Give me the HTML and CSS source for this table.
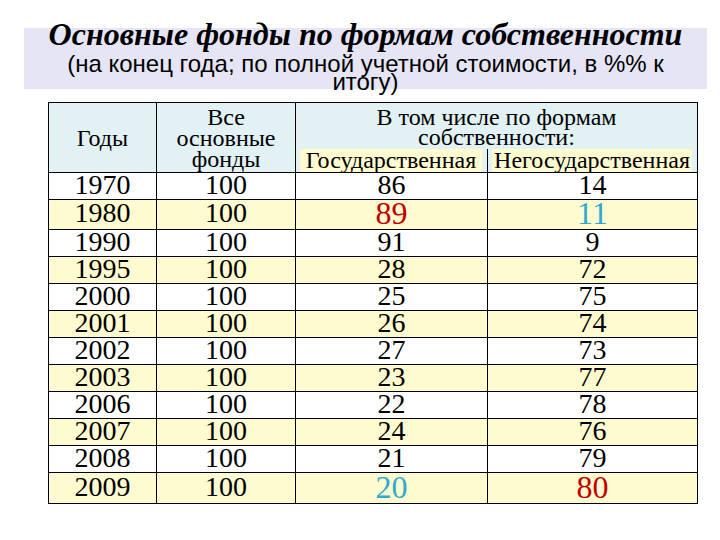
FILE: index.html
```html
<!DOCTYPE html>
<html lang="ru">
<head>
<meta charset="utf-8">
<link rel="stylesheet" href="styles.css">
</head>
<body>
<div class="slide">
  <div class="band">
    <h1 class="title">Основные фонды по формам собственности</h1>
    <p class="sub">(на конец года; по полной учетной стоимости, в %% к<br>итогу)</p>
  </div>
  <table class="grid">
    <colgroup>
      <col class="c1"><col class="c2"><col class="c3"><col class="c4">
    </colgroup>
    <thead>
      <tr class="h1row">
        <th rowspan="2" class="years">Годы</th>
        <th rowspan="2" class="all">Все<br>основные<br>фонды</th>
        <th colspan="2" class="incl">В том числе по формам<br>собственности:</th>
      </tr>
      <tr class="h2row">
        <th><span class="hl">Государственная</span></th>
        <th><span class="hl">Негосударственная</span></th>
      </tr>
    </thead>
    <tbody>
      <tr><td>1970</td><td>100</td><td>86</td><td>14</td></tr>
      <tr class="tall"><td>1980</td><td>100</td><td class="big red">89</td><td class="big cyan">11</td></tr>
      <tr><td>1990</td><td>100</td><td>91</td><td>9</td></tr>
      <tr><td>1995</td><td>100</td><td>28</td><td>72</td></tr>
      <tr><td>2000</td><td>100</td><td>25</td><td>75</td></tr>
      <tr><td>2001</td><td>100</td><td>26</td><td>74</td></tr>
      <tr><td>2002</td><td>100</td><td>27</td><td>73</td></tr>
      <tr><td>2003</td><td>100</td><td>23</td><td>77</td></tr>
      <tr><td>2006</td><td>100</td><td>22</td><td>78</td></tr>
      <tr><td>2007</td><td>100</td><td>24</td><td>76</td></tr>
      <tr><td>2008</td><td>100</td><td>21</td><td>79</td></tr>
      <tr class="tall2"><td>2009</td><td>100</td><td class="big cyan">20</td><td class="big red">80</td></tr>
    </tbody>
  </table>
</div>
</body>
</html>
```

FILE: styles.css
```css
html, body {
  margin: 0;
  padding: 0;
  background: #ffffff;
}
.slide {
  width: 720px;
  height: 540px;
  overflow: hidden;
  padding-top: 28px;
  box-sizing: border-box;
}
.band {
  display: flow-root;
  margin-left: 24px;
  width: 683px;
  height: 61px;
  background: #e5e5f5;
}
.title {
  margin: -10px 0 0 0;
  font-family: "Liberation Serif", "DejaVu Serif", serif;
  font-style: italic;
  font-weight: bold;
  font-size: 32px;
  line-height: 32px;
  text-align: center;
  white-space: nowrap;
  color: #000;
}
.sub {
  margin: 5px 0 0 0;
  font-family: "Liberation Sans", sans-serif;
  font-size: 24px;
  line-height: 18px;
  text-align: center;
  white-space: nowrap;
  color: #000;
}
.grid {
  margin: 13px 0 0 48px;
  border-collapse: collapse;
  table-layout: fixed;
  width: 649px;
  border: 1px solid #000;
  font-family: "Liberation Serif", "DejaVu Serif", serif;
  color: #000;
}
.c1 { width: 108px; }
.c2 { width: 139px; }
.c3 { width: 192px; }
.c4 { width: 210px; }
.grid th {
  font-weight: normal;
  font-size: 24px;
  line-height: 20px;
  padding: 0;
  background: #e2f1f4;
  border-left: 1px solid #000;
  border-right: 1px solid #000;
  white-space: nowrap;
}
.grid th.years { padding-top: 2px; }
.grid th.all { line-height: 21px; padding-top: 2px; }
.grid th.incl { padding-top: 3px; }
.h1row { height: 46px; }
.h2row { height: 23px; }
.h2row th {
  vertical-align: bottom;
}
.hl {
  display: block;
  margin: 0 5px 0 4px;
  background: #fefbd0;
  line-height: 23px;
}
.grid thead tr.h2row th { border-bottom: 1px solid #000; }
.grid td {
  font-size: 28px;
  line-height: 22px;
  padding: 0 0 2px 0;
  height: 24px;
  text-align: center;
  border: 1px solid #000;
}
.grid tbody tr:nth-child(even) td { background: #fefbd0; }
.grid tr.tall td { height: 27px; }
.grid tr.tall2 td { height: 28px; }
.grid td.big {
  font-size: 32px;
  line-height: 26px;
}
.red { color: #c00000; }
.cyan { color: #2fa9cf; }
```
